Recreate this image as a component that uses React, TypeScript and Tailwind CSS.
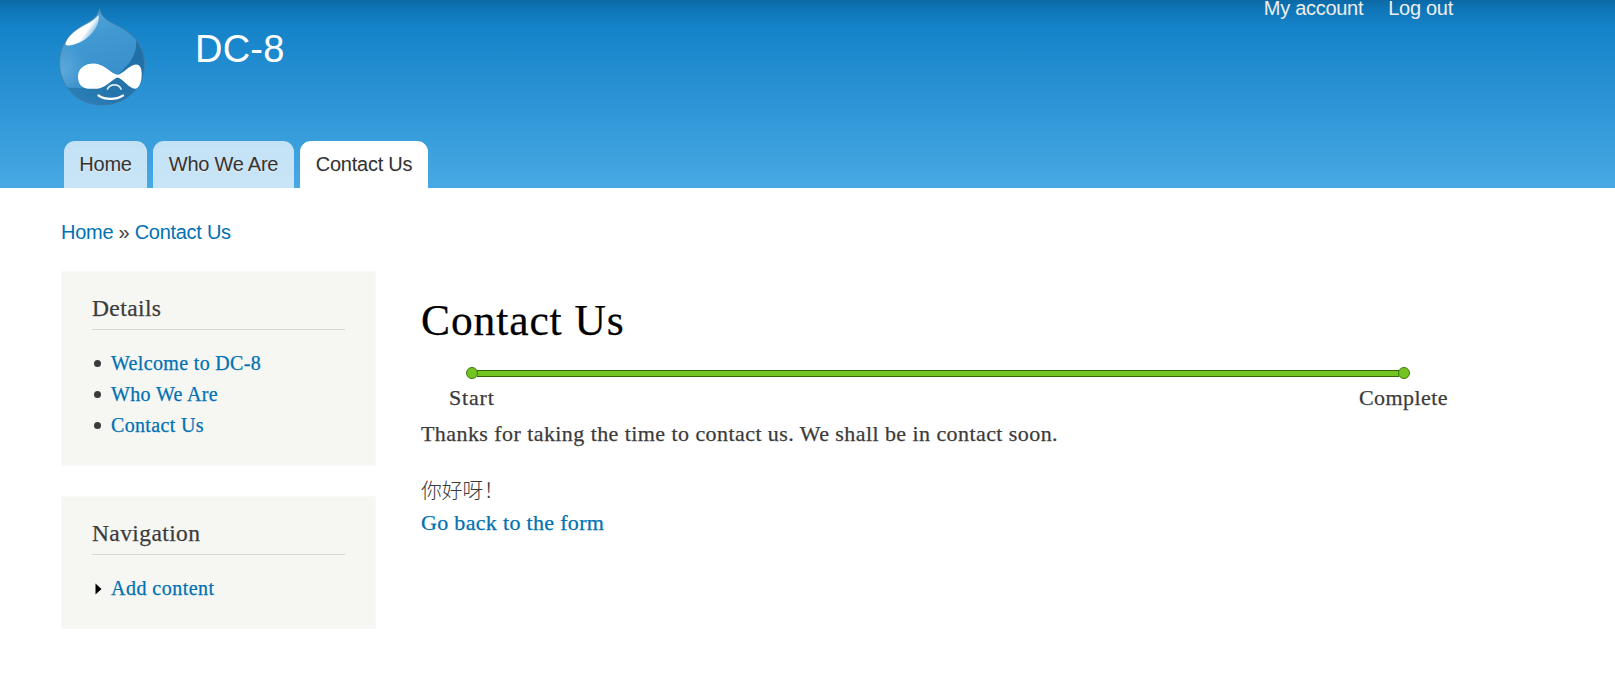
import React from "react";

const DROP =
  "M99.500 8.500C101 16 106 20 115 24.500C132 32 144.500 45 144.500 64C144.500 88 126 105 102 105C78 105 59.500 87 59.500 63C59.500 46 68 35 79 27.500C89 21 98 18 99.500 8.500Z";

function Logo() {
  return (
    <svg width="88" height="100" viewBox="58 7 88 100" className="block">
      <defs>
        <linearGradient id="drop" x1="0.3" y1="0" x2="0.6" y2="1">
          <stop offset="0" stopColor="#5aa6d8" />
          <stop offset="0.3" stopColor="#4199d2" />
          <stop offset="0.7" stopColor="#3990cb" />
          <stop offset="1" stopColor="#2a7db8" />
        </linearGradient>
        <linearGradient id="shade" x1="1" y1="0" x2="0" y2="1">
          <stop offset="0" stopColor="#1f6fa6" />
          <stop offset="0.6" stopColor="#2475ac" />
          <stop offset="1" stopColor="#2e83bd" />
        </linearGradient>
        <radialGradient id="glow" cx="62" cy="70" r="26" gradientUnits="userSpaceOnUse">
          <stop offset="0" stopColor="#7cbde8" stopOpacity="0.5" />
          <stop offset="1" stopColor="#7cbde8" stopOpacity="0" />
        </radialGradient>
        <linearGradient id="shine" x1="70" y1="30" x2="88" y2="42" gradientUnits="userSpaceOnUse">
          <stop offset="0.65" stopColor="#fff" />
          <stop offset="1" stopColor="#fff" stopOpacity="0.3" />
        </linearGradient>
        <clipPath id="dropClip">
          <path d={DROP} />
        </clipPath>
      </defs>
      <g clipPath="url(#dropClip)">
        <rect x="58" y="7" width="88" height="100" fill="url(#drop)" />
        <path d="M136 40C138 58 124 69 112 80L88 88L64 88L80 107L146 107L146 50Z" fill="url(#shade)" />
        <rect x="58" y="42" width="34" height="45" fill="url(#glow)" />
      </g>
      <path d="M65.500 43.500C68 35 77 29 86 24.500C92 21.500 96 18.500 98.500 15C100 21 96 31 87 38C80 43 71 46 67 45.500Q65 45 65.500 43.500Z" fill="url(#shine)" />
      <path d={DROP} fill="none" stroke="#3f7ca6" strokeWidth="1" opacity="0.8" />
      <path d="M78 77C78 68 85 63.500 94 63.500C104 63.500 111 74 117.500 74.800C123 74 130 64.500 136 64.500C140.500 64.500 141.700 69 141.700 74C141.700 82 139 88.700 135 88.700C129 88.700 123 78.500 117.500 77.500C113 78.500 105 88.700 97 88.700L89 88.700C82 88.700 78 84 78 77Z" fill="#fff" />
      <path d="M107.500 89C110 83.500 119 83.500 121 89" fill="none" stroke="#dcebf5" strokeWidth="1.800" strokeLinecap="round" />
      <path d="M98.500 95.500C105 100 116 100 123 95.500" fill="none" stroke="#fff" strokeWidth="2.200" strokeLinecap="round" />
    </svg>
  );
}

const LINK = "text-[#0071b3]";

function Tab({ label, className }: { label: string; className: string }) {
  return (
    <a className={`flex h-[47px] justify-center rounded-t-[11px] pt-[11px] text-[20px] leading-6 tracking-[-0.25px] text-[#333] [text-shadow:0_1px_1px_#eee] ${className}`}>
      {label}
    </a>
  );
}

function Block({ title, className, children }: { title: string; className: string; children: React.ReactNode }) {
  return (
    <section className={`border border-[#f9f9f9] bg-[#f6f6f2] px-[30px] ${className}`}>
      <h2 className="mt-[20px] h-[38px] border-b border-[#d6d6d6] text-[23.500px] leading-[32px] tracking-[0.4px] [text-shadow:0_1px_0_#fff]">{title}</h2>
      <ul className={`mt-[18px] text-[20px] leading-[31px] tracking-[0.34px] ${LINK}`}>{children}</ul>
    </section>
  );
}

function Bullet({ label }: { label: string }) {
  return (
    <li className="flex items-center">
      <span className="mr-[10px] ml-[2px] size-[7px] rounded-full bg-[#3b3b3b]" />
      {label}
    </li>
  );
}

export default function App() {
  return (
    <div className="h-[676px] w-[1615px] overflow-hidden bg-white font-['Liberation_Serif','Noto_Sans_CJK_SC',serif] whitespace-nowrap text-[#3b3b3b]">
      <header className="flex h-[188px] flex-col justify-between bg-[linear-gradient(180deg,#0b69a5_0px,#0f76b8_10px,#1583c9_28px,#48a9e4_188px)] font-['Liberation_Sans',Arial,sans-serif]">
        <div className="flex items-start pl-[58px] text-white">
          <div className="pt-[7px]"><Logo /></div>
          <div className="ml-[49px] pt-[28px] text-[38px] leading-[42px] tracking-[0.2px]">DC-8</div>
          <nav className="ml-auto flex gap-[25px] pr-[162px] text-[20px] leading-4 tracking-[-0.28px] text-[#eee]">
            <a>My account</a>
            <a>Log out</a>
          </nav>
        </div>
        <nav className="flex gap-[6px] pl-[64px]">
          <Tab label="Home" className="w-[83px] bg-white/70" />
          <Tab label="Who We Are" className="w-[141px] bg-white/70" />
          <Tab label="Contact Us" className="w-[128px] bg-white" />
        </nav>
      </header>
      <div className="mt-[32px] h-6 pl-[61px] font-['Liberation_Sans',Arial,sans-serif] text-[20px] leading-6 tracking-[-0.28px]">
        <a className={LINK}>Home</a> » <a className={LINK}>Contact Us</a>
      </div>
      <div className="mt-[28px] flex items-start pl-[61px] [-webkit-text-stroke:0.25px]">
        <aside className="-mt-px flex w-[315px] flex-col gap-[30px]">
          <Block title="Details" className="h-[195px]">
            <Bullet label="Welcome to DC-8" />
            <Bullet label="Who We Are" />
            <Bullet label="Contact Us" />
          </Block>
          <Block title="Navigation" className="h-[133px]">
            <li className="flex items-center tracking-[0.48px]">
              <svg width="7" height="12" className="mr-[9px] ml-[3px]"><path d="M0.500 0.500L6.500 6L0.500 11.500Z" fill="#000" /></svg>
              Add content
            </li>
          </Block>
        </aside>
        <main className="ml-[45px] w-[1030px] text-[22px] tracking-[0.43px]">
          <h1 className="mt-[22px] text-[43.500px] leading-[52px] tracking-[0.9px] text-black">Contact Us</h1>
          <div className="mt-[21px] ml-[45px] flex h-[12px] w-[944px] items-center">
            <span className="z-10 size-[12px] shrink-0 rounded-full border border-[#3e7a0c] bg-[#73c421]" />
            <span className="-mx-px h-[7px] flex-1 border-y border-[#336600] bg-[#73c421]" />
            <span className="z-10 size-[12px] shrink-0 rounded-full border border-[#3e7a0c] bg-[#73c421]" />
          </div>
          <div className="mt-[5px] ml-[28px] flex w-[999px] justify-between leading-[28px]">
            <span className="tracking-[0.8px]">Start</span>
            <span>Complete</span>
          </div>
          <p className="mt-[8px] leading-[28px]">Thanks for taking the time to contact us. We shall be in contact soon.</p>
          <p className="mt-[29px] text-[20.800px] leading-[28px] font-light tracking-normal [-webkit-text-stroke:0px]">你好呀！</p>
          <a className={`mt-[4px] block leading-[28px] tracking-[0.32px] ${LINK}`}>Go back to the form</a>
        </main>
      </div>
    </div>
  );
}
